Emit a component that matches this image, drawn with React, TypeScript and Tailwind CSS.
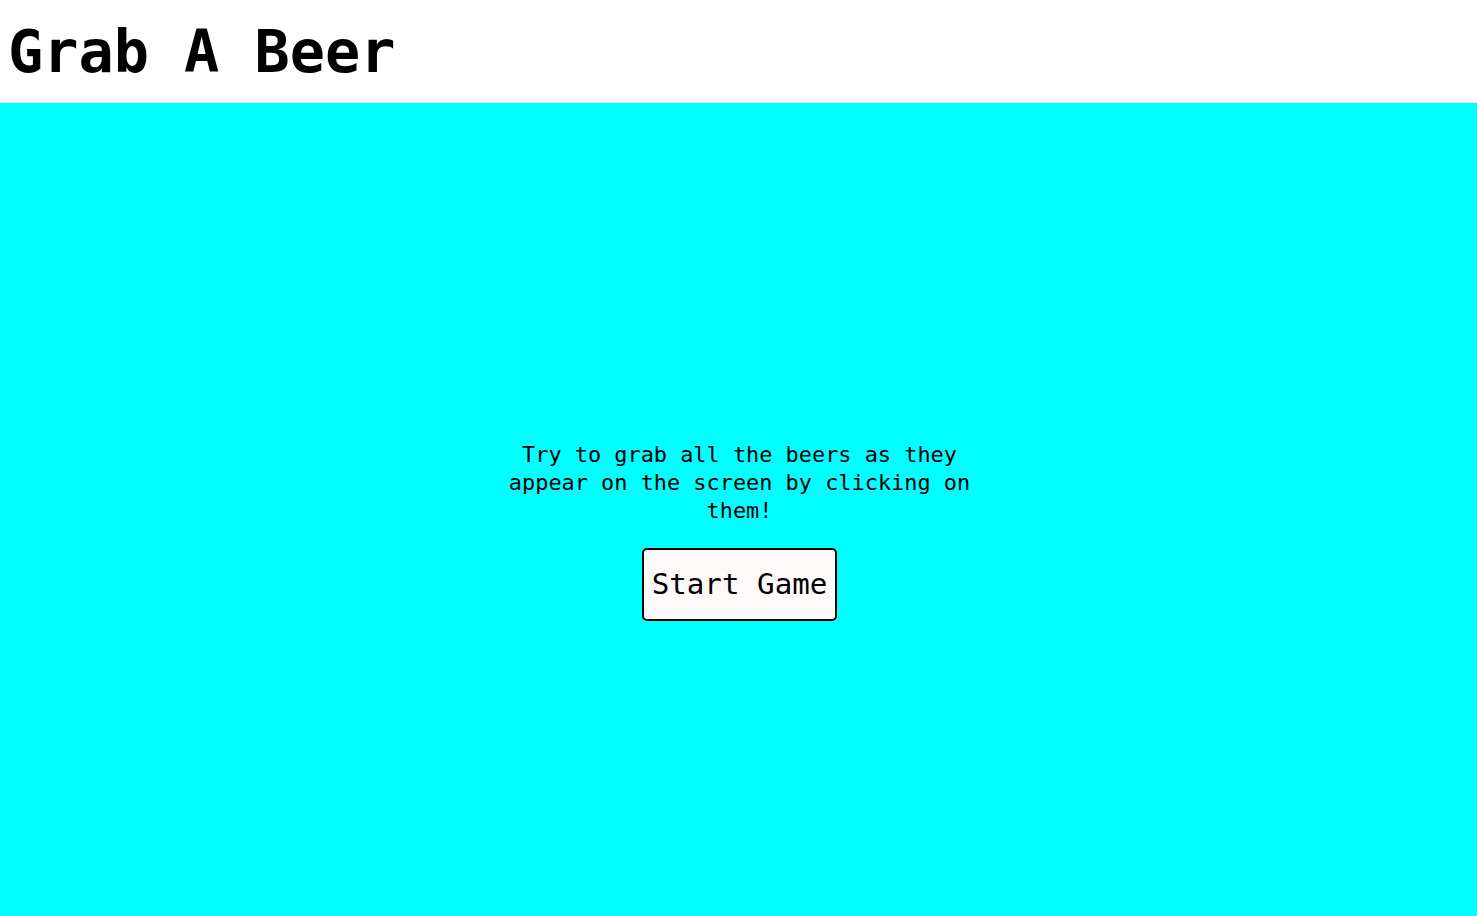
const App = () => {
  return (
    <div className="min-h-screen flex flex-col bg-white text-black font-['DejaVu_Sans_Mono','Liberation_Mono',monospace]">
      <header className="h-[103px] bg-white pl-[8px] pt-[18px]">
        <h1 className="text-[58.5px] leading-[68px] font-bold">Grab A Beer</h1>
      </header>

      <main className="flex-1 bg-[#00ffff] flex flex-col items-center justify-center pt-[43px] pl-[2px]">
        <p className="w-[480px] text-center text-[21.9px] leading-[28px]">
          Try to grab all the beers as they appear on the screen by clicking on
          them!
        </p>

        <button className="mt-[23px] w-[195px] h-[73px] flex items-center justify-center border-2 border-black rounded-[5px] bg-[#fffafa] text-[29.2px]">
          Start Game
        </button>
      </main>
    </div>
  );
};

export default App;
